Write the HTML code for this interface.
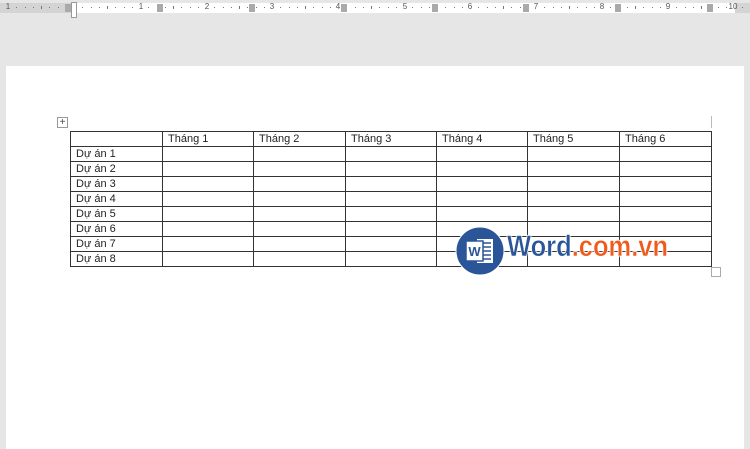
<!DOCTYPE html>
<html><head><style>
body{margin:0;width:750px;height:449px;background:#e6e6e6;position:relative;overflow:hidden;font-family:"Liberation Sans",sans-serif}
.r{position:absolute;top:3px;height:10px;background:#fff}
.n{position:absolute;top:2px;font-size:8px;color:#555;transform:translateX(-50%)}
.d{position:absolute;top:7px;width:1px;height:1px;background:#777}
.t{position:absolute;top:6px;width:1px;height:3px;background:#777}
.m{position:absolute;top:4px;width:6px;height:8px;background:#aaa}
.page{position:absolute;left:6px;top:66px;width:738px;height:383px;background:#fff}
table{position:absolute;left:70px;top:131px;border-collapse:collapse;table-layout:fixed;width:641px}
td{border:1px solid #333;height:15px;padding:0 0 0 5px;font-size:11px;line-height:14px;color:#222;box-sizing:border-box;overflow:hidden;white-space:nowrap}
</style></head><body>
<div class="r" style="left:0;width:750px;background:#d4d4d4"></div>
<div class="r" style="left:74px;width:661px"></div>
<div id="ruler"></div>
<script>
var h='',nums=[[8,'1'],[141,'1'],[207,'2'],[272,'3'],[338,'4'],[405,'5'],[470,'6'],[536,'7'],[602,'8'],[668,'9'],[733,'10']];
nums.forEach(function(a){h+='<div class="n" style="left:'+a[0]+'px">'+a[1]+'</div>'});
for(var x=8;x<745;x+=8.25){var k=Math.round((x-8)/8.25)%8;if(k==0)continue;h+='<div class="'+(k==4?'t':'d')+'" style="left:'+Math.round(x)+'px"></div>'}
[68,160,252,344,435,526,618,710].forEach(function(x){h+='<div class="m" style="left:'+(x-3)+'px"></div>'});
document.getElementById('ruler').innerHTML=h;
</script>
<div style="position:absolute;left:71px;top:2px;width:6px;height:16px;border:1px solid #999;background:#fff;box-sizing:border-box"></div>
<div class="page"></div>
<div style="position:absolute;left:57px;top:117px;width:11px;height:11px;border:1px solid #999;box-sizing:border-box;font-size:10px;line-height:9px;text-align:center;color:#444">+</div>
<div style="position:absolute;left:711px;top:116px;width:1px;height:12px;background:#bbb"></div>
<div style="position:absolute;left:711px;top:267px;width:10px;height:10px;border:1px solid #aaa;box-sizing:border-box"></div>
<table>
<colgroup><col style="width:92px"><col style="width:91px"><col style="width:92px"><col style="width:91px"><col style="width:91px"><col style="width:92px"><col style="width:92px"></colgroup>
<tr><td></td><td>Tháng 1</td><td>Tháng 2</td><td>Tháng 3</td><td>Tháng 4</td><td>Tháng 5</td><td>Tháng 6</td></tr>
<tr><td>Dự án 1</td><td></td><td></td><td></td><td></td><td></td><td></td></tr>
<tr><td>Dự án 2</td><td></td><td></td><td></td><td></td><td></td><td></td></tr>
<tr><td>Dự án 3</td><td></td><td></td><td></td><td></td><td></td><td></td></tr>
<tr><td>Dự án 4</td><td></td><td></td><td></td><td></td><td></td><td></td></tr>
<tr><td>Dự án 5</td><td></td><td></td><td></td><td></td><td></td><td></td></tr>
<tr><td>Dự án 6</td><td></td><td></td><td></td><td></td><td></td><td></td></tr>
<tr><td>Dự án 7</td><td></td><td></td><td></td><td></td><td></td><td></td></tr>
<tr><td>Dự án 8</td><td></td><td></td><td></td><td></td><td></td><td></td></tr>
</table>
<svg style="position:absolute;left:455px;top:226px" width="50" height="50" viewBox="0 0 50 50">
<circle cx="25" cy="25" r="24" fill="#2a5699" stroke="#fff" stroke-width="1"/>
<rect x="22" y="13" width="16" height="24" fill="#fff"/>
<g stroke="#2a5699" stroke-width="1.5"><line x1="28" y1="17" x2="36" y2="17"/><line x1="28" y1="21" x2="36" y2="21"/><line x1="28" y1="25" x2="36" y2="25"/><line x1="28" y1="29" x2="36" y2="29"/><line x1="28" y1="33" x2="36" y2="33"/></g>
<rect x="11" y="15" width="17" height="20" fill="#fff" stroke="#2a5699" stroke-width="1.5"/>
<text x="19.5" y="30" font-family="Liberation Sans" font-weight="bold" font-size="13" fill="#2a5699" text-anchor="middle">W</text>
</svg>
<div style="position:absolute;left:507px;top:232px;font-size:30px;font-weight:bold;line-height:30px;white-space:nowrap;-webkit-text-stroke:0.5px #fff;text-shadow:0 0 2px #fff,0 0 2px #fff;transform:scaleX(0.85);transform-origin:left"><span style="color:#2a5699">Word</span><span style="color:#f05a1a">.com.vn</span></div>
</body></html>
